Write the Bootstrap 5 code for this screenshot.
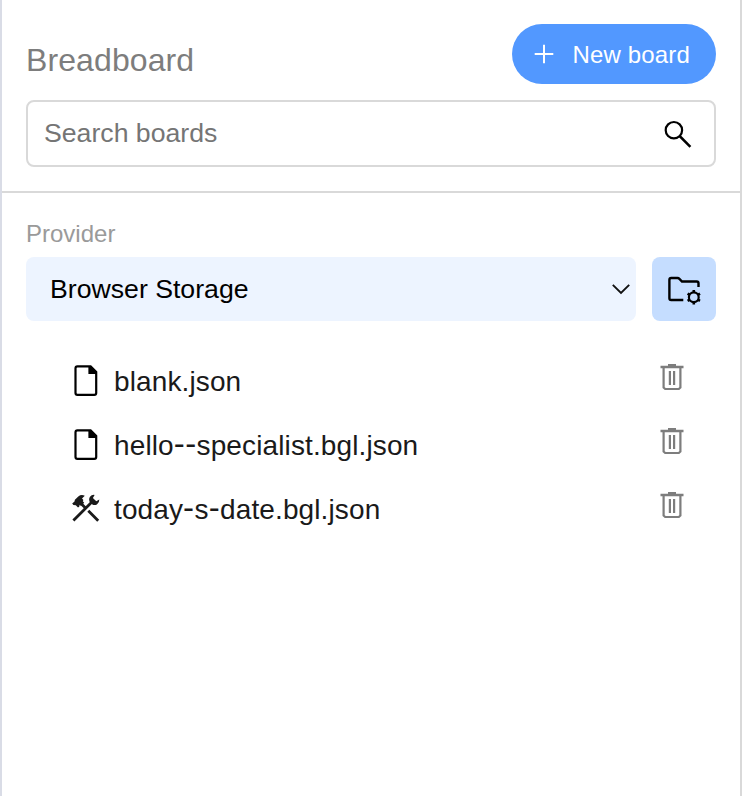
<!DOCTYPE html>
<html lang="en">
<head>
<meta charset="utf-8">
<meta name="viewport" content="width=device-width, initial-scale=1">
<title>Breadboard</title>
<link href="https://cdn.jsdelivr.net/npm/bootstrap@5.3.0/dist/css/bootstrap.min.css" rel="stylesheet">
<style>
body { font-family: "Liberation Sans", Arial, sans-serif; color: #1a1a1a; background: #fff; overflow: hidden; }
svg { display: block; flex: none; }
.panel { border-left: 2px solid #d9dce6; border-right: 2px solid #d9d9d9; }
.panel-head { height: 193px; border-bottom: 2px solid #d9d9d9; }
.title { font-size: 32px; line-height: 36px; color: #7d7d7d; font-weight: 400; padding-top: 11px; letter-spacing: .1px; }
.new-board, .new-board:hover { width: 204px; height: 60px; background: #5298ff; color: #fff; font-size: 24px; line-height: 28px; padding: 0 26px 0 20px; border: 0; }
.new-board span { padding-top: 1px; letter-spacing: .15px; }
.search { margin-top: 16px; height: 67px; border: 2px solid #d9d9d9; border-radius: 8px; padding: 0 16px; }
.search input { font-size: 26.67px; line-height: 32px; outline: 0; color: #000; margin-bottom: 2px; }
.search input::placeholder { color: #757575; opacity: 1; }
.provider-label { font-size: 24px; line-height: 28px; color: #9a9a9a; padding-top: 27px; margin-bottom: 9px; }
.provider { height: 64px; background: #edf4ff; border: 0; border-radius: 8px; font-size: 26.67px; color: #000; padding: 0 5px 0 24px; }
.provider-settings { width: 64px; height: 64px; background: #c5ddff; border: 0; border-radius: 8px; }
.boards { margin-top: 28px; padding: 0 32px 0 44px; }
.board-row { height: 64px; font-size: 28px; line-height: 32px; letter-spacing: .12px; }
.board-row .file-name { padding: 2px 0 0 12px; }
.dash { font-size: 33px; line-height: 0; letter-spacing: .4px; }
.trash { padding-bottom: 8px; }
</style>
</head>
<body>
<svg class="d-none" aria-hidden="true">
  <symbol id="file" viewBox="0 0 32 36"><path d="M7.4 3.4H20.6L26.2 9V30Q26.2 31.9 24.3 31.9H7.4Q5.5 31.9 5.5 30V5.3Q5.5 3.4 7.4 3.4Z" fill="none" stroke="#000" stroke-width="2.2"/><path d="M18.4 3V11H27V9L21 3Z" fill="#000"/></symbol>
  <symbol id="trash" viewBox="0 0 24 28"><path d="M.5 4H23.5M8 2.2H16" fill="none" stroke="#7d7d7d" stroke-width="2.3"/><path d="M3.6 4V24.5L5.2 26H18.8L20.4 24.5V4" fill="none" stroke="#7d7d7d" stroke-width="2.2"/><path d="M9.9 8V22M14.1 8V22" stroke="#7d7d7d" stroke-width="2.2"/></symbol>
</svg>
<main class="panel vh-100">
  <header class="panel-head px-4 pt-4">
    <div class="d-flex justify-content-between align-items-center">
      <h1 class="title m-0">Breadboard</h1>
      <button class="new-board btn rounded-pill d-flex align-items-center justify-content-between">
        <svg width="24" height="24" viewBox="0 0 24 24"><path d="M12 2.7V21.3M2.7 12H21.3" stroke="#fff" stroke-width="2"/></svg>
        <span>New board</span>
      </button>
    </div>
    <div class="search d-flex align-items-center">
      <input class="flex-grow-1 border-0 p-0 bg-transparent" type="text" placeholder="Search boards" aria-label="Search boards">
      <svg width="40" height="40" viewBox="0 0 40 40"><circle cx="15.9" cy="16.2" r="8.2" fill="none" stroke="#000" stroke-width="2.2"/><path d="M21.6 22L32.4 32.8" stroke="#000" stroke-width="2.5"/></svg>
    </div>
  </header>
  <section class="px-4">
    <div class="provider-label">Provider</div>
    <div class="d-flex gap-3">
      <button class="provider flex-grow-1 d-flex align-items-center justify-content-between">
        <span>Browser Storage</span>
        <svg width="20" height="20" viewBox="0 0 20 20"><path d="M1.8 5.8L10 14L18.2 5.8" fill="none" stroke="#111" stroke-width="1.9"/></svg>
      </button>
      <button class="provider-settings d-flex align-items-center justify-content-center p-0" aria-label="Provider settings">
        <svg width="40" height="40" viewBox="0 0 40 40" fill="none" stroke="#000" stroke-width="2.4"><path d="M19.3 31H7.2Q5.4 31 5.4 29.2V10.8Q5.4 9 7.2 9H13.6Q14.6 9 15.4 9.8L18 12.5H32.7Q34.5 12.5 34.5 14.3V18"/><circle cx="29.8" cy="28.2" r="4.9" stroke-width="2.2"/><path d="M29.8 23.5V21M29.8 32.9V35.4M33.8 25.9L36 24.6M33.8 30.5L36 31.8M25.8 25.9L23.6 24.6M25.8 30.5L23.6 31.8" stroke-width="2.6"/></svg>
      </button>
    </div>
    <ul class="boards list-unstyled mb-0">
      <li class="board-row d-flex align-items-center"><svg width="32" height="36"><use href="#file"/></svg><span class="file-name flex-grow-1">blank.json</span><span class="trash"><svg width="24" height="28"><use href="#trash"/></svg></span></li>
      <li class="board-row d-flex align-items-center"><svg width="32" height="36"><use href="#file"/></svg><span class="file-name flex-grow-1">hello<span class="dash">--</span>specialist.bgl.json</span><span class="trash"><svg width="24" height="28"><use href="#trash"/></svg></span></li>
      <li class="board-row d-flex align-items-center">
        <svg width="32" height="36" viewBox="0 .8 32 36"><path d="M2.2 13.4L4.5 11.2L4.9 9.5L8.3 6.2Q11.3 3.9 14.8 5.6L12 8.3L13.4 9.8L12.8 11L14.2 12.6L11 15.8L9.7 14.6L9.2 16.5L8 17.3L5.8 15L3.4 14.9Z" fill="#1a1a1a"/><path d="M11.5 13.8L15 17.3M18.3 20.6L28.2 30.5M3.4 30.3L21.9 11.8" fill="none" stroke="#1a1a1a" stroke-width="2.8"/><path d="M24.6 4.7L22.9 7.7L26.3 11L29.3 9.4Q29.5 12.7 26.9 14.3Q24.5 15.4 22.4 14.3L19.4 11.3Q18.5 9 19.8 6.9Q21.7 4.3 24.6 4.7Z" fill="#1a1a1a"/></svg>
        <span class="file-name flex-grow-1">today<span class="dash">-</span>s<span class="dash">-</span>date.bgl.json</span><span class="trash"><svg width="24" height="28"><use href="#trash"/></svg></span></li>
    </ul>
  </section>
</main>
<script src="https://cdn.jsdelivr.net/npm/bootstrap@5.3.0/dist/js/bootstrap.bundle.min.js"></script>
</body>
</html>
